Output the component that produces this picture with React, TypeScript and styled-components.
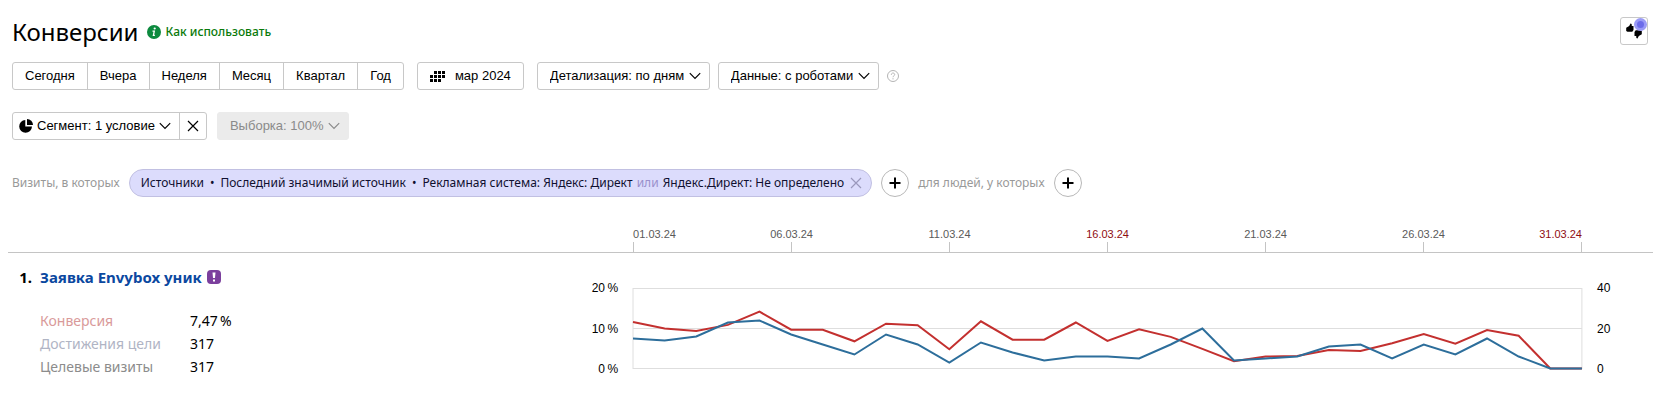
import React from 'react';
import styled, { createGlobalStyle, css } from 'styled-components';

const sans = '"Liberation Sans", Arial, sans-serif';
const brand = '"Noto Sans", "Open Sans", sans-serif';

const GlobalStyle = createGlobalStyle`
  *, *::before, *::after { box-sizing: border-box; }
  body { margin: 0; background: #fff; color: #000; font: 13px/16px ${sans}; }
  button, select { font: inherit; color: inherit; margin: 0; }
`;

const Page = styled.main`
  padding: 16px 8px;
`;

const Header = styled.header`
  display: flex;
  align-items: flex-start;
  justify-content: space-between;
  height: 46px;
  padding: 0 5px 0 4px;
`;

const Heading = styled.div`
  display: flex;
  align-items: center;
  gap: 8px;
  height: 32px;
`;

const Title = styled.h1`
  margin: 0;
  font: 400 24px/32px ${brand};
`;

const HelpLink = styled.a`
  display: flex;
  align-items: center;
  gap: 5px;
  color: #0a7a0a;
  font: 500 12px/16px ${brand};
  text-decoration: none;
`;

const frame = css`
  border: 1px solid #c8c8c8;
  border-radius: 3px;
  background: #fff;
`;

const FeedbackButton = styled.button`
  ${frame}
  position: relative;
  display: grid;
  place-items: center;
  width: 28px;
  height: 28px;
  margin-top: 1px;
  padding: 0;
`;

const Beacon = styled.span`
  position: absolute;
  top: 0;
  right: 0;
  width: 13px;
  height: 13px;
  border: 3px solid #9b9bf6;
  border-radius: 50%;
  background: #6c6cea;
`;

const Toolbar = styled.div<{ $gap: number }>`
  display: flex;
  align-items: center;
  gap: ${(p) => p.$gap}px;
  padding-left: 4px;
  margin-bottom: 22px;
`;

const ButtonGroup = styled.div`
  ${frame}
  display: flex;
  height: 28px;
`;

const GroupButton = styled.button<{ $pad?: string }>`
  display: flex;
  align-items: center;
  padding: ${(p) => p.$pad ?? '0 12px'};
  border: 0;
  background: none;
  white-space: nowrap;
  & + & { border-left: 1px solid #c8c8c8; }
`;

const SegmentLabel = styled.span`
  display: flex;
  align-items: center;
  gap: 4px;
`;

const PeriodButton = styled.button`
  ${frame}
  display: flex;
  align-items: center;
  gap: 10px;
  height: 28px;
  padding: 0 12px;
`;

const SelectBox = styled.span<{ $muted?: boolean }>`
  position: relative;
  display: inline-flex;
  color: ${(p) => (p.$muted ? '#8a8a8a' : '#000')};
  & > svg { position: absolute; right: 9px; top: 10px; pointer-events: none; }
`;

const Select = styled.select`
  ${frame}
  appearance: none;
  height: 28px;
  padding: 0 24px 0 12px;
  &:disabled { border-color: #ebebeb; background: #ebebeb; opacity: 1; color: inherit; }
`;

const Selects = styled.div`
  display: flex;
  align-items: center;
  gap: 8px;
`;

const Filters = styled.div`
  display: flex;
  align-items: center;
  gap: 9px;
  padding-left: 4px;
  margin-top: 29px;
  font: 12px/16px ${brand};
`;

const Hint = styled.span`
  color: #999;
  white-space: nowrap;
`;

const Pill = styled.div`
  display: flex;
  align-items: center;
  gap: 6px;
  height: 28px;
  padding: 0 9px 0 11px;
  border: 1px solid #c1c0e2;
  border-radius: 14px;
  background: #dcdcfc;
  color: #101030;
  white-space: nowrap;
`;

const Or = styled.span`
  margin: 0 1px;
  color: #9a90cc;
`;

const PlainButton = styled.button`
  display: grid;
  place-items: center;
  padding: 0;
  border: 0;
  background: none;
`;

const AddButton = styled.button`
  display: grid;
  place-items: center;
  width: 28px;
  height: 28px;
  padding: 0;
  border: 1px solid #b8b8b8;
  border-radius: 50%;
  background: #fff;
`;

const Columns = styled.div`
  display: grid;
  grid-template-columns: 38% 1fr 71px;
`;

const Axis = styled(Columns)`
  margin-top: 29px;
  border-bottom: 1px solid #c4c4c4;
`;

const Dates = styled.div`
  grid-column: 2;
  display: flex;
  justify-content: space-between;
`;

const DateMark = styled.div<{ $align: string; $holiday: boolean }>`
  display: flex;
  flex-direction: column;
  align-items: ${(p) => p.$align};
  width: 1px;
  font-size: 11px;
  color: ${(p) => (p.$holiday ? '#8f0d12' : '#5a5a5a')};
  white-space: nowrap;
  &::after {
    content: '';
    width: 1px;
    height: 10px;
    background: #c4c4c4;
  }
`;

const Goal = styled(Columns)`
  padding-top: 12px;
`;

const Summary = styled.section`
  display: grid;
  grid-template-columns: 24px 1fr;
  column-gap: 8px;
  align-content: start;
`;

const Index = styled.span`
  text-align: right;
  font: 700 15px/24px ${brand};
`;

const GoalTitle = styled.h2`
  display: flex;
  align-items: center;
  gap: 5px;
  margin: 0;
  font: 700 15px/24px ${brand};
`;

const GoalLink = styled.a`
  color: #0b48a0;
  text-decoration: none;
`;

const Metrics = styled.table`
  grid-column: 2;
  justify-self: start;
  margin-top: 20px;
  border-collapse: collapse;
  font: 14px/23px ${brand};
`;

const MetricName = styled.th<{ $color: string }>`
  width: 150px;
  padding: 0;
  text-align: left;
  font-weight: 400;
  color: ${(p) => p.$color};
`;

const MetricValue = styled.td`
  padding: 0;
`;

const GoalBody = styled.div`
  display: flex;
  justify-content: space-between;
`;

const Scale = styled.div<{ $right?: boolean }>`
  display: flex;
  flex-direction: column;
  justify-content: space-between;
  height: 97px;
  margin-top: 15px;
  padding: ${(p) => (p.$right ? '0 0 0 15px' : '0 15px 0 0')};
  text-align: ${(p) => (p.$right ? 'left' : 'right')};
  font-size: 12px;
`;

const ChartArea = styled.div`
  padding-top: 23px;
`;

const Chart = styled.svg`
  display: block;
  width: 100%;
  height: 82px;
  overflow: visible;
`;

const Chevron = () => (
  <svg width="12" height="8" viewBox="0 0 12 8" fill="none" stroke="currentColor" strokeWidth="1.2" aria-hidden="true">
    <path d="M.8 1.2 6 6.4l5.200-5.200" />
  </svg>
);

const Cross = ({ size, color }: { size: number; color: string }) => (
  <svg width={size} height={size} viewBox="0 0 12 12" fill="none" stroke={color} strokeWidth="1.2" aria-hidden="true">
    <path d="M1 1l10 10M11 1 1 11" />
  </svg>
);

const Plus = () => (
  <svg width="12" height="12" viewBox="0 0 12 12" stroke="#000" strokeWidth="2" aria-hidden="true">
    <path d="M6 .5v11M.5 6h11" />
  </svg>
);

const InfoIcon = () => (
  <svg width="14" height="14" viewBox="0 0 14 14" aria-hidden="true">
    <circle cx="7" cy="7" r="7" fill="#0c8a3e" />
    <circle cx="7.700" cy="3.500" r="1.100" fill="#fff" />
    <path d="M5.500 6.200h1.800L6.400 10.300h1.500" fill="none" stroke="#fff" strokeWidth="1.300" />
  </svg>
);

const PieIcon = () => (
  <svg width="14" height="14" viewBox="0 0 14 14" aria-hidden="true">
    <path d="M6.300 1v6.600h6.700A6.400 6.400 0 1 1 6.300 1Z" />
    <path d="M8 0a6 6 0 0 1 6 6H8Z" />
  </svg>
);

const PeriodIcon = () => (
  <svg width="15" height="11" viewBox="0 0 15 11" aria-hidden="true">
    {[[1, 4], [0, 4], [0, 3]].map(([from, to], row) =>
      Array.from({ length: to - from }, (_, i) => (
        <rect key={`${row}-${i}`} x={(from + i) * 4} y={row * 4} width="3" height="3" />
      )),
    )}
  </svg>
);

const HelpIcon = () => (
  <svg width="12" height="12" viewBox="0 0 12 12" fill="none" stroke="#b4b4b4" aria-hidden="true">
    <circle cx="6" cy="6" r="5.500" />
    <path d="M4.300 4.800c0-2.300 3.400-2.300 3.400-.2C7.700 5.800 6 5.800 6 7.200M6 8.200v1.200" />
  </svg>
);

const ThumbsIcon = () => (
  <svg width="18" height="18" viewBox="0 0 18 18" aria-hidden="true">
    <path d="M1.200 5.800 4.200 4 5.500 1.500c1.200.1 1.500 1 1.200 2.500H8.500v4L7.300 9.800H2.500L1.200 9Z" />
    <path d="M16.800 12.200 13.800 14 12.500 16.500c-1.200-.1-1.500-1-1.200-2.500H9.500v-4L10.700 8.200h4.800l1.300.8Z" />
  </svg>
);

const AlertIcon = () => (
  <svg width="14" height="14" viewBox="0 0 14 14" aria-hidden="true">
    <rect width="14" height="14" rx="4" fill="#7b3f9d" />
    <path d="M5.500 2.500h3L8 8H6Z" fill="#fff" />
    <rect x="6" y="9.500" width="2" height="2" fill="#fff" />
  </svg>
);

const periods = ['Сегодня', 'Вчера', 'Неделя', 'Месяц', 'Квартал', 'Год'];

const dates = [
  { label: '01.03.24', holiday: false },
  { label: '06.03.24', holiday: false },
  { label: '11.03.24', holiday: false },
  { label: '16.03.24', holiday: true },
  { label: '21.03.24', holiday: false },
  { label: '26.03.24', holiday: false },
  { label: '31.03.24', holiday: true },
];

const conversion = [
  11.6, 10, 9.4, 10.9, 14.2, 9.7, 9.7, 6.8, 11.2, 10.8, 4.8, 11.8, 7.2, 7.2, 11.5, 6.9,
  9.8, 7.9, 4.9, 1.8, 3, 3.1, 4.6, 4.4, 6.3, 8.6, 6.2, 9.6, 8.2, 0, 0,
];

const reaches = [
  15, 14, 16, 23, 24, 17, 12, 7, 17, 12, 3, 13, 8, 4, 6, 6,
  5, 12, 20, 4, 5, 6, 11, 12, 5, 12, 7, 15, 6, 0, 0,
];

const metrics = [
  { name: 'Конверсия', value: '7,47\u2009%', color: '#d99a9a' },
  { name: 'Достижения цели', value: '317', color: '#b0b4c4' },
  { name: 'Целевые визиты', value: '317', color: '#8c8c8c' },
];

const alignOf = (i: number) => (i === 0 ? 'flex-start' : i === dates.length - 1 ? 'flex-end' : 'center');

const line = (values: number[], max: number) =>
  values.map((v, i) => `${i * 10},${80.5 - (v / max) * 80}`).join(' ');

function Dropdown({ name, value, disabled }: { name: string; value: string; disabled?: boolean }) {
  return (
    <SelectBox $muted={disabled}>
      <Select aria-label={name} disabled={disabled}>
        <option>{`${name}: ${value}`}</option>
      </Select>
      <Chevron />
    </SelectBox>
  );
}

export default function App() {
  return (
    <>
      <GlobalStyle />
      <Page>
        <Header>
          <Heading>
            <Title>Конверсии</Title>
            <HelpLink href="#help"><InfoIcon />Как использовать</HelpLink>
          </Heading>
          <FeedbackButton aria-label="Оценить">
            <ThumbsIcon />
            <Beacon />
          </FeedbackButton>
        </Header>

        <Toolbar $gap={13}>
          <ButtonGroup>
            {periods.map((p) => <GroupButton key={p}>{p}</GroupButton>)}
          </ButtonGroup>
          <PeriodButton><PeriodIcon />мар 2024</PeriodButton>
          <Selects>
            <Dropdown name="Детализация" value="по дням" />
            <Dropdown name="Данные" value="с роботами" />
            <PlainButton aria-label="Справка"><HelpIcon /></PlainButton>
          </Selects>
        </Toolbar>

        <Toolbar $gap={10}>
          <ButtonGroup>
            <GroupButton $pad="0 8px 0 6px" aria-haspopup="menu">
              <SegmentLabel><PieIcon />Сегмент: 1 условие<Chevron /></SegmentLabel>
            </GroupButton>
            <GroupButton $pad="0 7px" aria-label="Сбросить сегмент"><Cross size={12} color="#000" /></GroupButton>
          </ButtonGroup>
          <Dropdown name="Выборка" value="100%" disabled />
        </Toolbar>

        <Filters>
          <Hint>Визиты, в которых</Hint>
          <Pill>
            <span>Источники</span>
            <span>•</span>
            <span>Последний значимый источник</span>
            <span>•</span>
            <span>
              Рекламная система: Яндекс: Директ <Or>или</Or> Яндекс.Директ: Не определено
            </span>
            <PlainButton aria-label="Удалить условие"><Cross size={12} color="#9a98bc" /></PlainButton>
          </Pill>
          <AddButton aria-label="Добавить условие визита"><Plus /></AddButton>
          <Hint>для людей, у которых</Hint>
          <AddButton aria-label="Добавить условие для людей"><Plus /></AddButton>
        </Filters>

        <Axis>
          <Dates>
            {dates.map((d, i) => (
              <DateMark key={d.label} $align={alignOf(i)} $holiday={d.holiday}>{d.label}</DateMark>
            ))}
          </Dates>
        </Axis>

        <Goal>
          <GoalBody>
            <Summary>
              <Index>1.</Index>
              <GoalTitle><GoalLink href="#goal">Заявка Envybox уник</GoalLink><AlertIcon /></GoalTitle>
              <Metrics>
                <tbody>
                  {metrics.map((m) => (
                    <tr key={m.name}>
                      <MetricName scope="row" $color={m.color}>{m.name}</MetricName>
                      <MetricValue>{m.value}</MetricValue>
                    </tr>
                  ))}
                </tbody>
              </Metrics>
            </Summary>
            <Scale>
              <span>20{'\u2009'}%</span>
              <span>10{'\u2009'}%</span>
              <span>0{'\u2009'}%</span>
            </Scale>
          </GoalBody>
          <ChartArea>
            <Chart viewBox="0 0 300 82" preserveAspectRatio="none" fill="none" role="img" aria-label="Заявка Envybox уник">
              <g stroke="#dedede">
                <path d="M0 .5H300M0 40.500H300M0 80.500H300" vectorEffect="non-scaling-stroke" />
                <path d="M0 0V81M300 0V81" vectorEffect="non-scaling-stroke" />
              </g>
              <polyline points={line(conversion, 20)} stroke="#c3302f" strokeWidth="2" vectorEffect="non-scaling-stroke" />
              <polyline points={line(reaches, 40)} stroke="#2d6e9b" strokeWidth="2" vectorEffect="non-scaling-stroke" />
            </Chart>
          </ChartArea>
          <Scale $right>
            <span>40</span>
            <span>20</span>
            <span>0</span>
          </Scale>
        </Goal>
      </Page>
    </>
  );
}
